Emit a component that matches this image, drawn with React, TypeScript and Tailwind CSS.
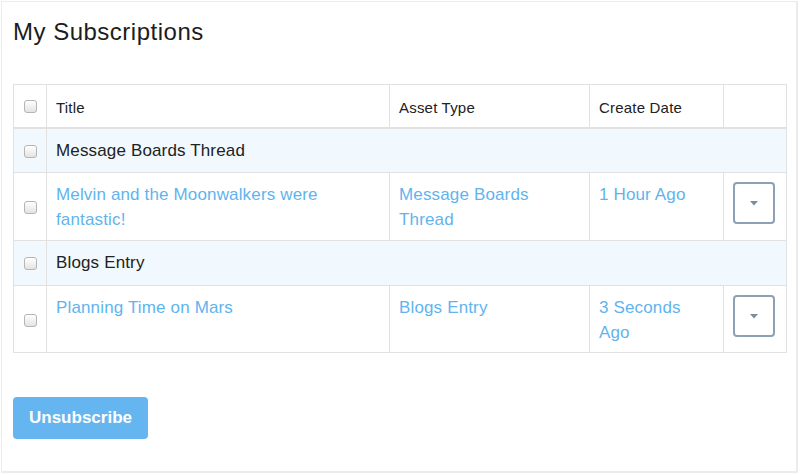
import React from "react";

const Check = () => (
  <span className="inline-block w-[13px] h-[13px] rounded-[3px] border border-[#b5b5b5] bg-gradient-to-b from-[#ffffff] to-[#e3e3e3] shadow-[inset_0_1px_0_#fff] align-middle" />
);

const Caret = () => (
  <button className="w-[42px] h-[42px] rounded-[4px] border-2 border-[#8ea1b4] bg-white flex items-center justify-center">
    <svg width="8" height="5" viewBox="0 0 8 5">
      <path d="M0 0 L8 0 L4 4.5 Z" fill="#7d8c9b" />
    </svg>
  </button>
);

const cell = "border border-[#e1e1e1]";
const tcell = `${cell} pl-[9px] pr-[12px] align-top pt-[9px]`;
const hcell = `${cell} border-b-2 text-left font-normal px-[9px] pt-[4px]`;

export default function App() {
  return (
    <div className="w-[800px] h-[475px] bg-white pt-[1px] pl-[1px]" style={{ fontFamily: '"Liberation Sans", Arial, sans-serif' }}>
      <div className="w-[797px] h-[472px] border-2 border-[#ececec] border-l-[1px] border-t-[1px] pl-[11px] pr-[12px]">
        <h1 className="text-[24px] leading-[28px] tracking-[0.5px] text-[#1c1c1c] pt-[16px]">My Subscriptions</h1>
        <table className="mt-[38px] border-collapse table-fixed w-[773px] text-[17px] tracking-[0.15px] text-[#222]">
          <colgroup>
            <col className="w-[33px]" />
            <col className="w-[343px]" />
            <col className="w-[200px]" />
            <col className="w-[134px]" />
            <col className="w-[63px]" />
          </colgroup>
          <thead>
            <tr className="h-[43px] text-[15px] tracking-[0.2px]">
              <th className={`${cell} border-b-2 text-center`}><Check /></th>
              <th className={hcell}>Title</th>
              <th className={hcell}>Asset Type</th>
              <th className={hcell}>Create Date</th>
              <th className={`${cell} border-b-2`}></th>
            </tr>
          </thead>
          <tbody>
            <tr className="h-[45px] bg-[#f1f9fe]">
              <td className={`${cell} text-center`}><Check /></td>
              <td className={`${cell} px-[9px]`} colSpan={4}>Message Boards Thread</td>
            </tr>
            <tr className="h-[68px] text-[#5fb4ee] leading-[25px]">
              <td className={`${cell} text-center`}><Check /></td>
              <td className={tcell}>Melvin and the Moonwalkers were fantastic!</td>
              <td className={tcell}>Message Boards Thread</td>
              <td className={tcell}>1 Hour Ago</td>
              <td className={`${cell} pl-[9px] align-top pt-[9px]`}><Caret /></td>
            </tr>
            <tr className="h-[45px] bg-[#f1f9fe]">
              <td className={`${cell} text-center`}><Check /></td>
              <td className={`${cell} px-[9px]`} colSpan={4}>Blogs Entry</td>
            </tr>
            <tr className="h-[67px] text-[#5fb4ee] leading-[25px]">
              <td className={`${cell} text-center`}><Check /></td>
              <td className={tcell}>Planning Time on Mars</td>
              <td className={tcell}>Blogs Entry</td>
              <td className={tcell}>3 Seconds Ago</td>
              <td className={`${cell} pl-[9px] align-top pt-[9px]`}><Caret /></td>
            </tr>
          </tbody>
        </table>
        <button className="mt-[44px] w-[135px] h-[42px] rounded-[4px] bg-[#64b5f0] text-white text-[17px] font-bold">Unsubscribe</button>
      </div>
    </div>
  );
}
